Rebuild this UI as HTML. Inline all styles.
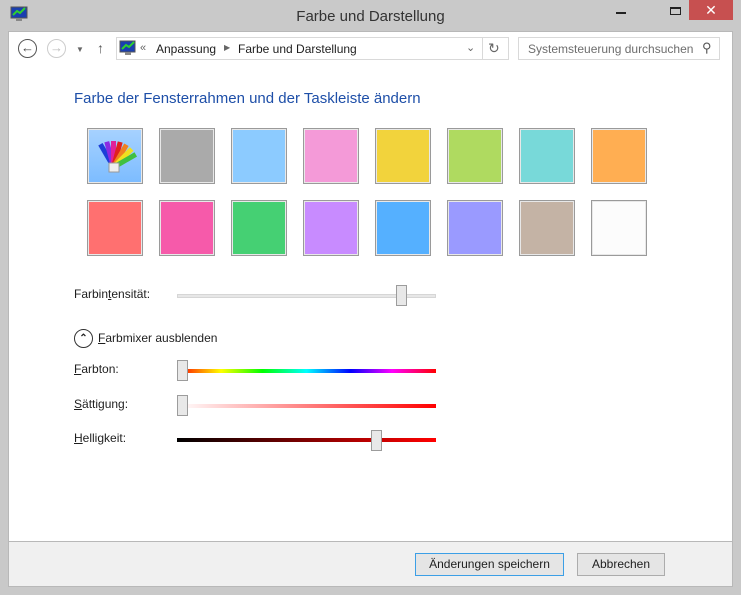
<!DOCTYPE html>
<html><head><meta charset="utf-8"><style>
*{margin:0;padding:0;box-sizing:border-box}
body{width:741px;height:595px;background:#c9c9c9;font-family:"Liberation Sans",sans-serif;font-size:12px;color:#1e1e1e;position:relative;overflow:hidden}
.abs{position:absolute}
.sw{position:absolute;width:56px;height:56px;border:1px solid #9a9a9a;box-shadow:inset 0 0 0 1px #e8e8e8}
.lbl{position:absolute;left:74px;font-size:12px}
.track{position:absolute;left:177px;width:259px;height:4px}
.thumb{position:absolute;width:11px;height:21px;background:#e8e8e8;border:1px solid #9c9c9c}
.btn{position:absolute;top:553px;height:23px;border:1px solid #acacac;background:#e5e5e5;text-align:center;line-height:21px;font-size:12px}
</style></head><body>
<div class="abs" style="left:0;top:0;width:741px;height:31px;background:#c9c9c9"></div>
<svg class="abs" style="left:10px;top:6px" width="18" height="16"><rect x="1" y="1" width="16" height="11" fill="#1a3fb0" stroke="#555"/><path d="M3 9l4-4 3 2 5-5" stroke="#2fd02f" stroke-width="2" fill="none"/><path d="M6 12h6v3H6z" fill="#888"/></svg>
<div class="abs" style="left:0;width:741px;top:8px;text-align:center;font-size:15px;color:#333">Farbe und Darstellung</div>
<div class="abs" style="left:616px;top:12px;width:10px;height:2px;background:#222"></div>
<div class="abs" style="left:670px;top:7px;width:11px;height:8px;border:1px solid #222;border-top-width:2px"></div>
<div class="abs" style="left:689px;top:0;width:44px;height:20px;background:#c75050;color:#fff;text-align:center;font-size:14px;line-height:20px">✕</div>
<div class="abs" style="left:8px;top:31px;width:725px;height:511px;background:#fff;border:1px solid #b8b8b8"></div>
<div class="abs" style="left:8px;top:542px;width:725px;height:45px;background:#f0f0f0;border-left:1px solid #b8b8b8;border-right:1px solid #b8b8b8;border-bottom:1px solid #b8b8b8"></div>
<div class="abs" style="left:18px;top:39px;width:19px;height:19px;border:1.5px solid #555;border-radius:50%;text-align:center;line-height:16px;font-size:13px;color:#444">←</div>
<div class="abs" style="left:47px;top:39px;width:19px;height:19px;border:1.5px solid #ccc;border-radius:50%;text-align:center;line-height:16px;font-size:13px;color:#bbb">→</div>
<div class="abs" style="left:76px;top:45px;font-size:8px;color:#666">▼</div>
<div class="abs" style="left:97px;top:40px;font-size:14px;color:#555">↑</div>
<div class="abs" style="left:116px;top:37px;width:393px;height:23px;border:1px solid #d9d9d9"></div>
<div class="abs" style="left:482px;top:37px;width:1px;height:23px;background:#d9d9d9"></div>
<svg class="abs" style="left:119px;top:40px" width="18" height="16"><rect x="1" y="1" width="15" height="11" fill="#1a3fb0" stroke="#555"/><path d="M3 9l4-4 3 2 5-5" stroke="#2fd02f" stroke-width="2" fill="none"/><path d="M6 12h6v3H6z" fill="#888"/></svg>
<div class="abs" style="left:140px;top:42px;color:#666;font-size:11px">«</div>
<div class="abs" style="left:156px;top:42px">Anpassung</div>
<div class="abs" style="left:224px;top:43px;font-size:8px;color:#666">▶</div>
<div class="abs" style="left:238px;top:42px">Farbe und Darstellung</div>
<div class="abs" style="left:466px;top:41px;color:#666;font-size:11px">⌄</div>
<div class="abs" style="left:488px;top:40px;color:#666;font-size:14px">↻</div>
<div class="abs" style="left:518px;top:37px;width:202px;height:23px;border:1px solid #d9d9d9"></div>
<div class="abs" style="left:528px;top:42px;color:#6d6d6d">Systemsteuerung durchsuchen</div>
<div class="abs" style="left:702px;top:40px;color:#555;font-size:13px">⚲</div>
<div class="abs" style="left:74px;top:90px;font-size:15px;color:#1e4fa8">Farbe der Fensterrahmen und der Taskleiste ändern</div>
<div class="sw" style="left:87px;top:128px;background:linear-gradient(#a7d2ff,#7cbcff)"></div>
<svg class="abs" style="left:95px;top:137px" width="42" height="38"><g transform="rotate(-30 18 30)"><rect x="16" y="4" width="5" height="26" fill="#1d3fd8"/></g><g transform="rotate(-15 18 30)"><rect x="16" y="4" width="5" height="26" fill="#8a2be2"/></g><g transform="rotate(0 18 30)"><rect x="16" y="4" width="5" height="26" fill="#e0209a"/></g><g transform="rotate(15 18 30)"><rect x="16" y="4" width="5" height="26" fill="#e02020"/></g><g transform="rotate(30 18 30)"><rect x="16" y="4" width="5" height="26" fill="#f08020"/></g><g transform="rotate(45 18 30)"><rect x="16" y="4" width="5" height="26" fill="#f0e020"/></g><g transform="rotate(60 18 30)"><rect x="16" y="4" width="5" height="26" fill="#40c040"/></g><rect x="14" y="26" width="10" height="9" fill="#eee" stroke="#999"/></svg>
<div class="sw" style="left:159px;top:128px;background:#aaa"></div>
<div class="sw" style="left:231px;top:128px;background:#8ccbff"></div>
<div class="sw" style="left:303px;top:128px;background:#f49ad8"></div>
<div class="sw" style="left:375px;top:128px;background:#f2d33c"></div>
<div class="sw" style="left:447px;top:128px;background:#afda60"></div>
<div class="sw" style="left:519px;top:128px;background:#78d9d9"></div>
<div class="sw" style="left:591px;top:128px;background:#ffae52"></div>
<div class="sw" style="left:87px;top:200px;background:#ff7070"></div>
<div class="sw" style="left:159px;top:200px;background:#f65aaa"></div>
<div class="sw" style="left:231px;top:200px;background:#45d073"></div>
<div class="sw" style="left:303px;top:200px;background:#c88bff"></div>
<div class="sw" style="left:375px;top:200px;background:#55b0ff"></div>
<div class="sw" style="left:447px;top:200px;background:#9a9aff"></div>
<div class="sw" style="left:519px;top:200px;background:#c4b3a5"></div>
<div class="sw" style="left:591px;top:200px;background:#fcfcfc"></div>
<div class="lbl" style="top:287px">Farbin<u>t</u>ensität:</div>
<div class="track" style="top:294px;background:#e7e7e7;border:1px solid #d6d6d6"></div>
<div class="thumb" style="left:396px;top:285px"></div>
<div class="abs" style="left:74px;top:329px;width:19px;height:19px;border:1.5px solid #333;border-radius:50%;text-align:center;font-size:10px;line-height:17px;font-weight:bold">⌃</div>
<div class="abs" style="left:98px;top:331px"><u>F</u>arbmixer ausblenden</div>
<div class="lbl" style="top:362px"><u>F</u>arbton:</div>
<div class="track" style="top:369px;background:linear-gradient(90deg,#f00,#ff0 17%,#0f0 33%,#0ff 50%,#00f 67%,#f0f 83%,#f00)"></div>
<div class="thumb" style="left:177px;top:360px"></div>
<div class="lbl" style="top:397px"><u>S</u>ättigung:</div>
<div class="track" style="top:404px;background:linear-gradient(90deg,#fff,#f00)"></div>
<div class="thumb" style="left:177px;top:395px"></div>
<div class="lbl" style="top:431px"><u>H</u>elligkeit:</div>
<div class="track" style="top:438px;background:linear-gradient(90deg,#000,#f00)"></div>
<div class="thumb" style="left:371px;top:430px"></div>
<div class="btn" style="left:415px;width:149px;border-color:#3c9fe6">Änderungen speichern</div>
<div class="btn" style="left:577px;width:88px">Abbrechen</div>
</body></html>
